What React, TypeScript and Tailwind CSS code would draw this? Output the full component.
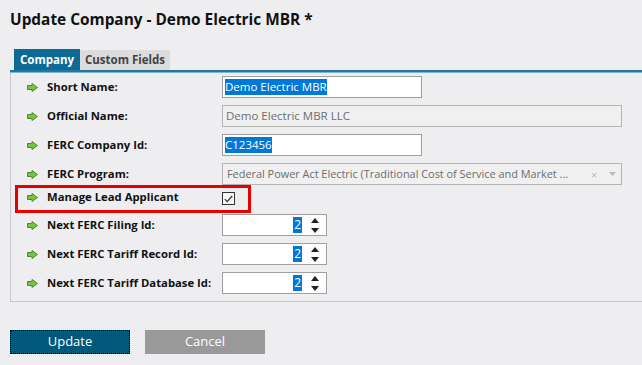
import { ReactNode } from "react";

function Arrow() {
  return (
    <svg width="11" height="9" viewBox="0 0 11 9" className="shrink-0">
      <path
        d="M0.5 2.5 H5 V0.5 L10.5 4.5 L5 8.5 V6.5 H0.5 Z"
        fill="#7cc242"
        stroke="#4d8a2a"
        strokeWidth="1"
      />
    </svg>
  );
}

function Row({
  label,
  h = "h-[29px]",
  lh = "h-[22px]",
  children,
}: {
  label: string;
  h?: string;
  lh?: string;
  children: ReactNode;
}) {
  return (
    <div className={`flex items-start ${h}`}>
      <div className={`flex items-center w-[211px] pl-[16px] ${lh}`}>
        <Arrow />
        <span className="ml-[9px] text-[11.3px] font-bold text-[#111] whitespace-nowrap">{label}</span>
      </div>
      {children}
    </div>
  );
}

function Spinner() {
  return (
    <div className="flex items-center w-[105px] h-[22px] border border-[#a0a0a0] bg-white">
      <div className="flex-1 flex justify-end pr-[6px]">
        <span className="bg-[#0078d7] text-white text-[12px] leading-[16px] px-[1px]">2</span>
      </div>
      <div className="flex flex-col items-center justify-center gap-[5px] w-[14px] mr-[4px]">
        <svg width="8" height="5" viewBox="0 0 8 5">
          <path d="M0 5 L4 0 L8 5 Z" fill="#222" />
        </svg>
        <svg width="8" height="5" viewBox="0 0 8 5">
          <path d="M0 0 L4 5 L8 0 Z" fill="#222" />
        </svg>
      </div>
    </div>
  );
}

export default function App() {
  return (
    <div className="w-[642px] h-[365px] bg-[#eeeef0] font-['Open_Sans',sans-serif] overflow-hidden">
      <h1 className="pt-[9px] pl-[10px] text-[15.4px] font-bold text-[#111] leading-[22px]">
        Update Company - Demo Electric MBR *
      </h1>
      <div className="mt-[18px] ml-[10px]">
        <div className="flex items-end h-[21px] pl-[4px]">
          <div className="w-[66px] h-[21px] bg-[#0d6a95] text-white text-[11.5px] font-bold flex items-center justify-center">
            Company
          </div>
          <div className="w-[90px] h-[20px] bg-[#dcdcdc] text-[#444] text-[11.5px] font-bold flex items-center justify-center">
            Custom Fields
          </div>
        </div>
        <div className="h-[3px] bg-[#1f77a5] border-b border-[#7fb3cf]" />
        <div className="border-l border-b border-[#c8c8c8] h-[229px] pt-[3px]">
          <Row label="Short Name:">
            <div className="w-[200px] h-[22px] border border-[#a0a0a0] bg-white flex items-center pl-[2px]">
              <span className="bg-[#0078d7] text-white text-[11.5px] leading-[16px]">Demo Electric MBR</span>
            </div>
          </Row>
          <Row label="Official Name:">
            <div className="w-[400px] h-[22px] border border-[#b4b4b4] bg-[#f0f0f0] flex items-center pl-[3px] text-[11.5px] text-[#6d6d6d]">
              Demo Electric MBR LLC
            </div>
          </Row>
          <Row label="FERC Company Id:">
            <div className="w-[200px] h-[22px] border border-[#a0a0a0] bg-white flex items-center pl-[2px]">
              <span className="bg-[#0078d7] text-white text-[11.5px] leading-[16px]">C123456</span>
            </div>
          </Row>
          <Row label="FERC Program:">
            <div className="w-[400px] h-[22px] border border-[#b4b4b4] bg-[#f0f0f0] flex items-center pl-[4px] text-[#6d6d6d]">
              <span className="whitespace-nowrap w-[350px] text-[10.9px]">
                Federal Power Act Electric (Traditional Cost of Service and Market ...
              </span>
              <span className="ml-[14px] text-[11px] text-[#bbb] leading-none">×</span>
              <svg width="7" height="4" viewBox="0 0 7 4" className="ml-[12px]">
                <path d="M0 0 L3.5 4 L7 0 Z" fill="#bbb" />
              </svg>
            </div>
          </Row>
          <div className="relative">
            <Row label="Manage Lead Applicant" h="h-[22px]" lh="h-[10px]">
              <div className="w-[13px] h-[13px] border border-[#333] bg-[#f8f8f8] flex items-center justify-center">
                <svg width="9" height="8" viewBox="0 0 9 8">
                  <path d="M0.8 4.2 L3.2 6.6 L8.2 1" fill="none" stroke="#333" strokeWidth="1.2" />
                </svg>
              </div>
            </Row>
            <div className="absolute left-[4px] top-[-7px] w-[236px] h-[28px] border-[3px] border-[#e60000] pointer-events-none" />
          </div>
          <Row label="Next FERC Filing Id:">
            <Spinner />
          </Row>
          <Row label="Next FERC Tariff Record Id:">
            <Spinner />
          </Row>
          <Row label="Next FERC Tariff Database Id:">
            <Spinner />
          </Row>
        </div>
      </div>
      <div className="flex gap-[15px] mt-[28px] ml-[10px]">
        <button className="w-[120px] h-[24px] bg-[#00587a] text-white text-[13px] border border-dotted border-black">
          Update
        </button>
        <button className="w-[120px] h-[24px] bg-[#999999] text-white text-[13px]">Cancel</button>
      </div>
    </div>
  );
}
